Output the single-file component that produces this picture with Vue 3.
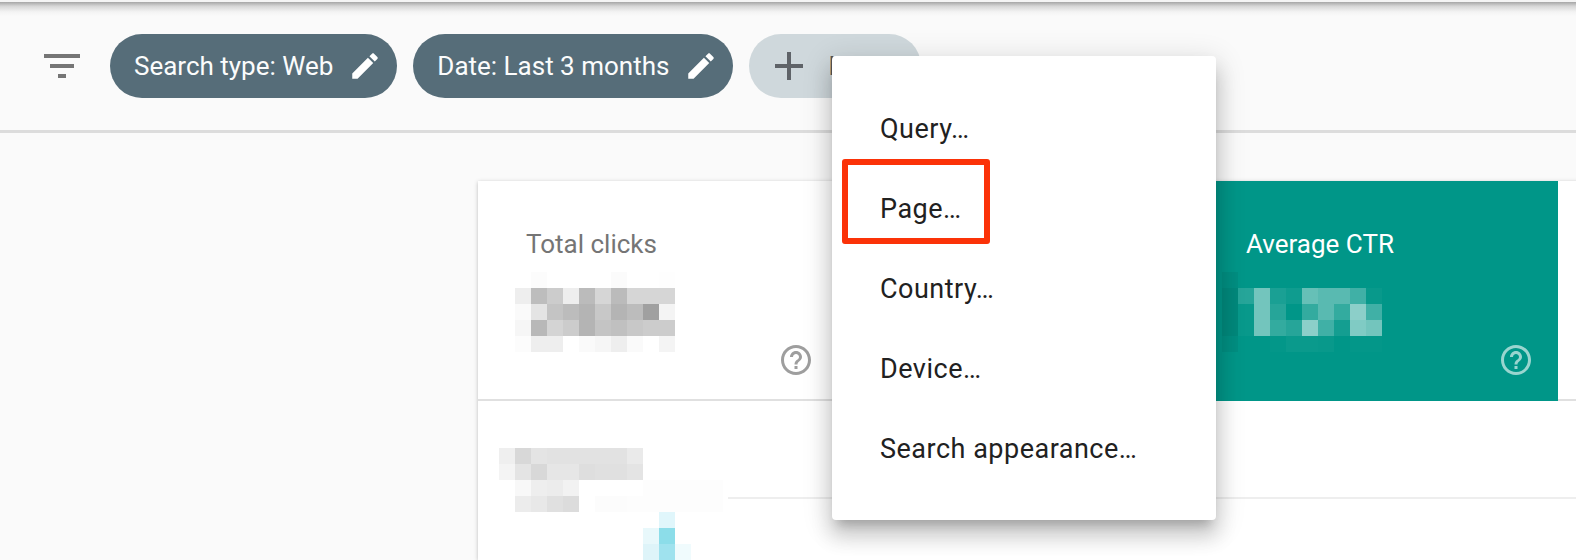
<template>
  <div class="page">
    <div class="top-shade" />

    <!-- Filter bar -->
    <div class="toolbar">
      <svg class="filter-icon" viewBox="0 0 24 24" aria-hidden="true">
        <path d="M10 18h4v-2h-4v2zM3 6v2h18V6H3zm3 7h12v-2H6v2z" />
      </svg>
      <div v-for="chip in chips" :key="chip" class="chip">
        <span>{{ chip }}</span>
        <svg class="chip__edit" viewBox="0 0 24 24" aria-hidden="true">
          <path d="M3 17.25V21h3.75L17.81 9.94l-3.75-3.75L3 17.25zM20.71 7.04c.39-.39.39-1.02 0-1.41l-2.34-2.34c-.39-.39-1.02-.39-1.41 0l-1.83 1.83 3.75 3.75 1.83-1.83z" />
        </svg>
      </div>
      <div class="chip chip--new">
        <svg class="chip__add" viewBox="0 0 24 24" aria-hidden="true">
          <path d="M19 13h-6v6h-2v-6H5v-2h6V5h2v6h6v2z" />
        </svg>
        <span>New</span>
      </div>
    </div>

    <!-- Performance card -->
    <div class="card">
      <div class="tiles">
        <div class="tile">
          <div class="tile__label">Total clicks</div>
          <div class="mosaic mosaic--clicks">
            <div v-for="(row, r) in clicksPixels" :key="r" class="mosaic__row">
              <i v-for="(c, k) in row" :key="k" class="mosaic__px" :style="{ background: c }" />
            </div>
          </div>
          <svg class="help" viewBox="0 0 24 24" aria-hidden="true"><path :d="helpPath" /></svg>
        </div>
        <div class="tile" />
        <div class="tile tile--ctr">
          <div class="tile__label">Average CTR</div>
          <div class="mosaic mosaic--ctr">
            <div v-for="(row, r) in ctrPixels" :key="r" class="mosaic__row">
              <i v-for="(c, k) in row" :key="k" class="mosaic__px" :style="{ background: c }" />
            </div>
          </div>
          <svg class="help" viewBox="0 0 24 24" aria-hidden="true"><path :d="helpPath" /></svg>
        </div>
        <div class="tile" />
      </div>

      <div class="table">
        <div class="table__key">
          <div class="mosaic mosaic--key">
            <div v-for="(row, r) in keyPixels" :key="r" class="mosaic__row">
              <i v-for="(c, k) in row" :key="k" class="mosaic__px" :style="{ background: c }" />
            </div>
          </div>
          <div class="mosaic mosaic--bar">
            <div v-for="(row, r) in barPixels" :key="r" class="mosaic__row">
              <i v-for="(c, k) in row" :key="k" class="mosaic__px" :style="{ background: c }" />
            </div>
          </div>
        </div>
        <div class="table__rest" />
      </div>
    </div>

    <!-- Open filter menu -->
    <div class="menu">
      <div v-for="item in menuItems" :key="item" class="menu__item">{{ item }}</div>
      <div class="callout" />
    </div>
  </div>
</template>

<script setup>
const chips = ['Search type: Web', 'Date: Last 3 months']
const menuItems = ['Query…', 'Page…', 'Country…', 'Device…', 'Search appearance…']

const helpPath = 'M11 18h2v-2h-2v2zm1-16C6.48 2 2 6.48 2 12s4.48 10 10 10 10-4.48 10-10S17.52 2 12 2zm0 18c-4.41 0-8-3.59-8-8s3.59-8 8-8 8 3.59 8 8-3.59 8-8 8zm0-14c-2.21 0-4 1.79-4 4h2c0-1.1.9-2 2-2s2 .9 2 2c0 2-3 1.75-3 5h2c0-2.25 3-2.5 3-5 0-2.21-1.79-4-4-4z'

// two-digit shorthand: 'bd' -> #bdbdbd
const grey = (s) => s.split(' ').map((v) => `#${v}${v}${v}`)
const white = (list) => list.map((a) => (a < 0 ? `rgba(0,0,0,${-a})` : `rgba(255,255,255,${a})`))

const clicksPixels = [
  'ff fc ff ff ff ff fb ff ff fe',
  'ee bd cc ee bb d6 bb d6 d6 d6',
  'fa e4 c4 bc b4 c8 b4 bc a0 f4',
  'f6 b8 d4 cc b4 c4 c0 c8 cc cc',
  'fc ee ee ff fa f6 ee fa ff f4',
].map(grey)

const ctrPixels = [
  [-0.05, 0, 0, 0, 0, 0, 0, 0, 0, 0],
  [-0.09, 0.15, 0.45, 0.1, 0.06, 0.4, 0.35, 0.35, 0.25, 0.03],
  [-0.09, 0.03, 0.45, 0.15, 0, 0.2, 0.35, 0.2, 0.55, 0.25],
  [-0.09, 0.03, 0.45, 0.2, 0.15, 0.55, 0.25, 0.08, 0.5, 0.45],
  [-0.05, 0, 0, 0.01, 0.04, 0.04, 0.03, 0, 0.01, 0.01],
].map(white)

const keyPixels = [
  'ef d8 e4 e2 e2 e2 e2 e2 ea ff ff ff ff ff',
  'f4 e4 d8 e6 e6 de e0 e0 e4 ff ff ff ff ff',
  'ff f8 ee ec f2 ff ff ff ff fd fd fd fd fd',
  'ff ec e8 e0 dc ff fc fc fd fd fd fd fd fd',
].map(grey)

const barPixels = [
  ['#ffffff', '#e0f6fb', '#ffffff'],
  ['#e8f8fb', '#8cdde9', '#ffffff'],
  ['#def4f9', '#9fe2ee', '#f0fbfd'],
]
</script>

<style scoped>
.page {
  position: relative;
  width: 1576px;
  height: 560px;
  overflow: hidden;
  background: #fafafa;
  font-family: Roboto, "Liberation Sans", sans-serif;
}

.top-shade {
  height: 14px;
  border-top: 2px solid #f4f4f4;
  background: linear-gradient(180deg, #a6a6a6 0%, #d6d6d6 30%, #f3f3f3 70%, #fafafa 100%);
}

/* ── Filter bar ───────────────────────────────────────────────── */
.toolbar {
  height: 117px;
  box-sizing: border-box;
  padding: 18px 0 0 38px;
  display: flex;
  align-items: flex-start;
  gap: 16px;
  border-bottom: 3px solid #dcdcdc;
}
.filter-icon {
  width: 48px;
  height: 48px;
  margin: 8px 8px 0 0;
  fill: #757575;
}
.chip {
  height: 64px;
  padding: 0 15px 0 24px;
  display: flex;
  align-items: center;
  gap: 15px;
  border-radius: 32px;
  background: #566d79;
  color: #fbfcfc;
  font-size: 26px;
  white-space: nowrap;
}
.chip__edit {
  width: 34px;
  height: 34px;
  fill: #fff;
}
.chip--new {
  padding: 0 41px 0 16px;
  gap: 15px;
  background: #cfd8dc;
  color: #555;
}
.chip__add {
  width: 48px;
  height: 48px;
  fill: #5f6368;
}

/* ── Card ─────────────────────────────────────────────────────── */
.card {
  width: 1440px;
  margin: 48px 0 0 478px;
  background: #fff;
  box-shadow: 0 1px 4px rgba(0, 0, 0, .25);
}
.tiles {
  display: flex;
}
.tile {
  position: relative;
  flex: 0 0 360px;
  height: 220px;
  box-sizing: border-box;
  padding: 49px 0 0 48px;
  border-bottom: 2px solid #e0e0e0;
  color: #757575;
  font-size: 26px;
}
.tile--ctr {
  background: #009688;
  border-bottom-color: #009688;
  color: #fff;
}
.tile__label {
  line-height: 28px;
}
.help {
  position: absolute;
  right: 24px;
  bottom: 21px;
  width: 36px;
  height: 36px;
  fill: #9e9e9e;
}
.tile--ctr .help {
  fill: rgba(255, 255, 255, .6);
}

.mosaic__row {
  display: flex;
}
.mosaic__px {
  display: block;
  flex: 0 0 16px;
  height: 16px;
}
.mosaic--clicks {
  margin: 14px 0 0 -11px;
}
.mosaic--ctr {
  margin: 14px 0 0 -24px;
}
.mosaic--key {
  padding: 47px 0 0 21px;
}
.mosaic--bar {
  padding-left: 165px;
}

.table {
  display: flex;
}
.table__key {
  flex: 0 0 250px;
  height: 159px;
}
.table__rest {
  flex: 1;
  height: 96px;
  border-bottom: 2px solid #eeeeee;
}

/* ── Menu ─────────────────────────────────────────────────────── */
.menu {
  position: absolute;
  left: 832px;
  top: 56px;
  width: 384px;
  padding: 32px 0;
  border-radius: 4px;
  background: #fff;
  box-shadow: 0 10px 10px -6px rgba(0, 0, 0, .2), 0 16px 20px 2px rgba(0, 0, 0, .14), 0 6px 28px 4px rgba(0, 0, 0, .12);
}
.menu__item {
  height: 80px;
  box-sizing: border-box;
  padding: 2px 0 0 48px;
  display: flex;
  align-items: center;
  color: #212121;
  font-size: 27px;
  letter-spacing: .5px;
}
.callout {
  position: absolute;
  left: 10px;
  top: 103px;
  width: 148px;
  height: 85px;
  box-sizing: border-box;
  border: 6px solid #fb3208;
  border-radius: 3px;
}
</style>

<style>
body {
  background: #fafafa;
}
</style>
